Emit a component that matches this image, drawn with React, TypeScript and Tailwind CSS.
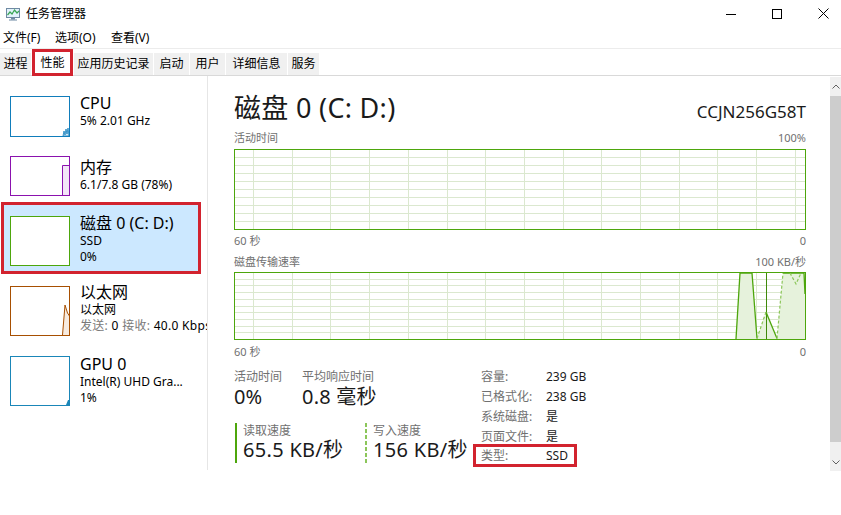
import React from 'react';

const GREEN = '#4da60c';

function AppIcon() {
  return (
    <svg width="17" height="16" viewBox="0 0 17 16" className="ml-[5px] shrink-0">
      <rect x="1.5" y="2.5" width="13" height="9" fill="#e3f1fb" stroke="#6f8aa3" />
      <polyline points="2.5,9 5,6 7,8 9.5,4 12,7 14,5" fill="none" stroke="#3aa655" strokeWidth="1.2" />
      <rect x="6" y="12" width="4" height="1.5" fill="#6f8aa3" />
      <rect x="4" y="13.5" width="8" height="1" fill="#6f8aa3" />
    </svg>
  );
}

function WindowControls() {
  return (
    <div className="ml-auto -mr-[5px] flex h-full">
      <div className="w-[46px] flex items-center justify-center">
        <svg width="10" height="10" viewBox="0 0 10 10">
          <line x1="0" y1="5.5" x2="10" y2="5.5" stroke="#000" />
        </svg>
      </div>
      <div className="w-[46px] flex items-center justify-center">
        <svg width="10" height="10" viewBox="0 0 10 10">
          <rect x="0.5" y="0.5" width="9" height="9" fill="none" stroke="#000" />
        </svg>
      </div>
      <div className="w-[46px] flex items-center justify-center">
        <svg width="11" height="11" viewBox="0 0 11 11">
          <path d="M0.5 0.5 L10.5 10.5 M10.5 0.5 L0.5 10.5" stroke="#000" />
        </svg>
      </div>
    </div>
  );
}

const tabs: { label: string; w: string }[] = [
  { label: '进程', w: 'w-[31px]' },
  { label: '性能', w: 'w-[41px]' },
  { label: '应用历史记录', w: 'w-[79px]' },
  { label: '启动', w: 'w-[35px]' },
  { label: '用户', w: 'w-[35px]' },
  { label: '详细信息', w: 'w-[61px]' },
  { label: '服务', w: 'w-[31px]' },
];

function Thumb({ color, h, children }: { color: string; h: number; children?: React.ReactNode }) {
  return (
    <svg width="60" height={h} className="block shrink-0 bg-white">
      {children}
      <rect x="0.5" y="0.5" width="59" height={h - 1} fill="none" stroke={color} />
    </svg>
  );
}

function Chart({ h, rows, children }: { h: number; rows: number; children?: React.ReactNode }) {
  const w = 572;
  const xs = Array.from({ length: 15 }, (_, k) => Math.round(19 + k * 38.7) + 0.5);
  const ys = Array.from({ length: rows - 1 }, (_, k) => Math.round(((k + 1) * (h - 1)) / rows) + 0.5);
  return (
    <svg width={w} height={h} className="block">
      {xs.map((x) => (
        <line key={'x' + x} x1={x} y1={0} x2={x} y2={h} stroke="#dbe8cf" />
      ))}
      {ys.map((y) => (
        <line key={'y' + y} x1={0} y1={y} x2={w} y2={y} stroke="#dbe8cf" />
      ))}
      {children}
      <rect x="0.5" y="0.5" width={w - 1} height={h - 1} fill="none" stroke={GREEN} />
    </svg>
  );
}

function Sidebar() {
  return (
    <div className="w-[208px] shrink-0 border-r border-[#e6e6e6] overflow-hidden">
      {/* CPU */}
      <div className="h-[70px] flex pl-[10px]">
        <div className="mt-[20px]">
          <Thumb color="#117dbb" h={41}>
            <polygon points="53,40 54,35 55,39 56,33 57,38 58,32 59,40" fill="#d3e8f6" stroke="#117dbb" strokeWidth="0.8" />
          </Thumb>
        </div>
        <div className="ml-[10px] mt-[17px]">
          <div className="text-[16px] leading-[20px]">CPU</div>
          <div className="text-[12px] leading-[16px]">5% 2.01 GHz</div>
        </div>
      </div>
      {/* Memory */}
      <div className="h-[56px] flex pl-[10px]">
        <div className="mt-[10px]">
          <Thumb color="#8b12ae" h={40}>
            <polygon points="52.5,40 52.5,9.5 60,9.5 60,40" fill="#f3e6f7" stroke="#8b12ae" />
          </Thumb>
        </div>
        <div className="ml-[10px] mt-[11px]">
          <div className="text-[16px] leading-[20px]">内存</div>
          <div className="text-[12px] leading-[16px]">6.1/7.8 GB (78%)</div>
        </div>
      </div>
      {/* Disk (selected) */}
      <div className="h-[72px] w-[200px] ml-[1px] border-[3px] border-[#d2232f] bg-[#cce8ff] flex pl-[6px]">
        <div className="mt-[11px]">
          <Thumb color={GREEN} h={50} />
        </div>
        <div className="ml-[10px] mt-[8px]">
          <div className="text-[16px] leading-[20px]">磁盘 0 (C: D:)</div>
          <div className="text-[12px] leading-[16px]">SSD</div>
          <div className="text-[12px] leading-[16px]">0%</div>
        </div>
      </div>
      {/* Ethernet */}
      <div className="h-[72px] flex pl-[10px]">
        <div className="mt-[12px]">
          <Thumb color="#a74f01" h={50}>
            <polygon points="52.5,49 55,19 57.5,27 59.5,30 59.5,49" fill="#f7ebe0" stroke="none" />
            <polyline points="52.5,49 55,19 57.5,27 59.5,30" fill="none" stroke="#a74f01" />
          </Thumb>
        </div>
        <div className="ml-[10px] mt-[8px] whitespace-nowrap">
          <div className="text-[16px] leading-[20px]">以太网</div>
          <div className="text-[12px] leading-[16px]">以太网</div>
          <div className="text-[12px] leading-[16px] tracking-[0.3px]">
            <span className="text-[#7a7a7a]">发送:</span> 0 <span className="text-[#7a7a7a]">接收:</span> 40.0 Kbps
          </div>
        </div>
      </div>
      {/* GPU */}
      <div className="h-[70px] flex pl-[10px]">
        <div className="mt-[10px]">
          <Thumb color="#1a86b8" h={50}>
            <polygon points="56,49 58,44 59.5,44 59.5,49" fill="#1a86b8" />
          </Thumb>
        </div>
        <div className="ml-[10px] mt-[8px] whitespace-nowrap">
          <div className="text-[16px] leading-[20px]">GPU 0</div>
          <div className="text-[12px] leading-[16px]">Intel(R) UHD Gra...</div>
          <div className="text-[12px] leading-[16px]">1%</div>
        </div>
      </div>
    </div>
  );
}

function DashedBar() {
  return (
    <svg width="2" height="40" className="block shrink-0">
      <line x1="1" y1="0" x2="1" y2="40" stroke="#8cc65a" strokeWidth="2" strokeDasharray="4 2" />
    </svg>
  );
}

const info: [string, string][] = [
  ['容量:', '239 GB'],
  ['已格式化:', '238 GB'],
  ['系统磁盘:', '是'],
  ['页面文件:', '是'],
];

function DetailPanel() {
  return (
    <div className="flex-1 pl-[26px] pr-[24px] text-[#1a1a1a]">
      <div className="pt-[16px] flex items-baseline justify-between">
        <div className="text-[27px] leading-[32px] tracking-[0.3px]">磁盘 0 (C: D:)</div>
        <div className="text-[17px] leading-[22px]">CCJN256G58T</div>
      </div>
      <div className="mt-[6px] flex justify-between text-[11px] leading-[15px] text-[#707070]">
        <span>活动时间</span>
        <span>100%</span>
      </div>
      <div className="mt-[4px]">
        <Chart h={81} rows={10} />
      </div>
      <div className="mt-[3px] flex justify-between text-[11px] leading-[15px] text-[#707070]">
        <span>60 秒</span>
        <span>0</span>
      </div>
      <div className="mt-[6px] flex justify-between text-[11px] leading-[15px] text-[#707070]">
        <span>磁盘传输速率</span>
        <span>100 KB/秒</span>
      </div>
      <div className="mt-[3px]">
        <Chart h={68} rows={10}>
          <polygon points="502,67.5 506,1 518,1 523,66 532,40 543,66 549,1 571,1 571,67.5" fill="#e6f2dc" />
          <line x1="532.5" y1="1" x2="532.5" y2="67" stroke="#3f8a0a" />
          <polyline points="502,67 506,1 518,1 523,66.5" fill="none" stroke={GREEN} strokeWidth="1.3" />
          <polyline points="532,40 543,66.5" fill="none" stroke={GREEN} strokeWidth="1.3" />
          <polyline points="549,1 570,1 571,22" fill="none" stroke={GREEN} strokeWidth="1.3" />
          <polyline points="523,66.5 532,40" fill="none" stroke="#8cc65a" strokeWidth="1.2" strokeDasharray="3 2" />
          <polyline points="543,66.5 549,1" fill="none" stroke="#8cc65a" strokeWidth="1.2" strokeDasharray="3 2" />
          <polyline points="556,1 562,12 567,1" fill="none" stroke="#8cc65a" strokeWidth="1.2" strokeDasharray="3 2" />
        </Chart>
      </div>
      <div className="mt-[4px] flex justify-between text-[11px] leading-[15px] text-[#707070]">
        <span>60 秒</span>
        <span>0</span>
      </div>

      <div className="mt-[10px] flex">
        <div className="w-[247px]">
          <div className="flex">
            <div className="w-[68px]">
              <div className="text-[12px] leading-[16px] text-[#707070]">活动时间</div>
              <div className="text-[20px] leading-[24px]">0%</div>
            </div>
            <div>
              <div className="text-[12px] leading-[16px] text-[#707070]">平均响应时间</div>
              <div className="text-[20px] leading-[24px] tracking-[0.2px]">0.8 毫秒</div>
            </div>
          </div>
          <div className="mt-[14px] flex">
            <div className="w-[131px] flex">
              <div className="ml-[1px] w-[2px] h-[40px] bg-[#4da60c]" />
              <div className="pl-[6px]">
                <div className="text-[12px] leading-[15px] text-[#707070]">读取速度</div>
                <div className="text-[20px] leading-[24px] whitespace-nowrap tracking-[0.3px]">65.5 KB/秒</div>
              </div>
            </div>
            <div className="flex">
              <DashedBar />
              <div className="pl-[6px]">
                <div className="text-[12px] leading-[15px] text-[#707070]">写入速度</div>
                <div className="text-[20px] leading-[24px] whitespace-nowrap tracking-[0.3px]">156 KB/秒</div>
              </div>
            </div>
          </div>
        </div>
        <div className="-mt-[2px] text-[12px] leading-[20px]">
          {info.map(([k, v]) => (
            <div key={k} className="flex">
              <span className="w-[65px] text-[#707070]">{k}</span>
              <span>{v}</span>
            </div>
          ))}
          <div className="-ml-[8px] -mt-[3px] w-[104px] h-[23px] border-[3px] border-[#d2232f] pl-[5px] flex items-center leading-[17px]">
            <span className="w-[65px] text-[#707070]">类型:</span>
            <span>SSD</span>
          </div>
        </div>
      </div>
    </div>
  );
}

function Scrollbar() {
  return (
    <div className="w-[11px] shrink-0 mt-[1px] h-[394px] bg-[#f0f0f0] flex flex-col">
      <div className="h-[19px] flex items-center pl-[2px]">
        <svg width="8" height="5" viewBox="0 0 8 5">
          <polyline points="0.5,4.5 4,1 7.5,4.5" fill="none" stroke="#606060" />
        </svg>
      </div>
      <div className="h-[346px] bg-[#cdcdcd]" />
      <div className="h-[12px]" />
      <div className="h-[17px] flex items-center pl-[2px]">
        <svg width="8" height="5" viewBox="0 0 8 5">
          <polyline points="0.5,0.5 4,4 7.5,0.5" fill="none" stroke="#606060" />
        </svg>
      </div>
    </div>
  );
}

export default function App() {
  return (
    <div className="w-[841px] h-[515px] bg-white overflow-hidden text-black font-['Noto_Sans','Noto_Sans_CJK_SC',sans-serif]">
      <div className="h-[27px] flex items-center">
        <AppIcon />
        <span className="ml-[4px] text-[12px]">任务管理器</span>
        <WindowControls />
      </div>
      <div className="h-[22px] flex items-center text-[12px] border-b border-[#ececec]">
        <span className="pl-[3px] w-[55px]">文件(F)</span>
        <span className="w-[56px]">选项(O)</span>
        <span>查看(V)</span>
      </div>
      <div className="h-[27px] flex items-end gap-[1px] border-b border-[#d9d9d9] text-[12px]">
        {tabs.map((t) =>
          t.label === '性能' ? (
            <div
              key={t.label}
              className={`${t.w} h-[27px] -mb-[1px] border-[3px] border-[#d2232f] bg-white flex items-center justify-center`}
            >
              {t.label}
            </div>
          ) : (
            <div key={t.label} className={`${t.w} h-[22px] bg-[#f0f0f0] flex items-center justify-center`}>
              {t.label}
            </div>
          )
        )}
      </div>
      <div className="flex h-[394px]">
        <Sidebar />
        <DetailPanel />
        <Scrollbar />
      </div>
    </div>
  );
}
